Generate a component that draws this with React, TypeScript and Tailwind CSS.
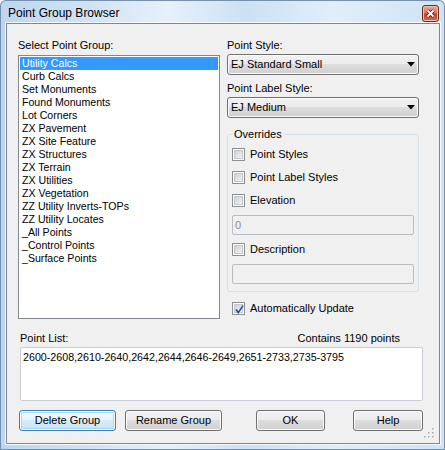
import React from 'react'

// Point Group Browser — Vista-style dialog
const GROUPS = [
  'Utility Calcs',
  'Curb Calcs',
  'Set Monuments',
  'Found Monuments',
  'Lot Corners',
  'ZX Pavement',
  'ZX Site Feature',
  'ZX Structures',
  'ZX Terrain',
  'ZX Utilities',
  'ZX Vegetation',
  'ZZ Utility Inverts-TOPs',
  'ZZ Utility Locates',
  '_All Points',
  '_Control Points',
  '_Surface Points',
]

const btnBase =
  'flex h-[21px] items-center justify-center rounded-[3px] border text-[11px] leading-[13px] text-black'
const btnNormal =
  'border-[#707070] bg-[linear-gradient(#f2f2f2_0%,#ebebeb_50%,#dddddd_50%,#cfcfcf_100%)] shadow-[inset_0_0_0_1px_#fbfbfb]'
const btnFocus =
  'border-[#3c7fb1] bg-[linear-gradient(#f3f9fd_0%,#e8f3fb_50%,#d7ebf8_50%,#cae4f6_100%)] shadow-[inset_0_0_0_1px_#ffffff,inset_0_0_0_2px_#a6d8f5]'

function Combo({ value }: { value: string }) {
  return (
    <div className="mt-[2px] flex h-[21px] items-center justify-between rounded-[3px] border border-[#707070] bg-[linear-gradient(#f2f2f2_0%,#ebebeb_50%,#dddddd_50%,#cfcfcf_100%)] pl-[3px] pr-[3px] shadow-[inset_0_0_0_1px_#fbfbfb]">
      <span className="leading-[13px]">{value}</span>
      <svg width="8" height="5" viewBox="0 0 8 5">
        <polygon points="0,0 8,0 4,4.5" fill="#000" />
      </svg>
    </div>
  )
}

function CheckBox({ label, checked }: { label: string; checked?: boolean }) {
  return (
    <div className="flex h-[16px] items-center">
      <span className="relative flex h-[13px] w-[13px] shrink-0 items-center justify-center border border-[#8e8f8f] bg-white">
        <span className="h-[9px] w-[9px] bg-[linear-gradient(135deg,#c9cdd3_0%,#e4e6e9_60%,#f7f7f7_100%)] shadow-[inset_0_0_0_1px_#c3c7cd]" />
        {checked && (
          <svg className="absolute left-[1px] top-[1px]" width="11" height="11" viewBox="0 0 11 11">
            <path d="M2 5.5 L4.3 8.6 L9 1.6" fill="none" stroke="#31508f" strokeWidth="1.7" />
          </svg>
        )}
      </span>
      <span className="ml-[5px] leading-[13px]">{label}</span>
    </div>
  )
}

function TextBox({ value }: { value?: string }) {
  return (
    <div className="flex h-[20px] w-full items-center rounded-[2px] border border-[#b9bdc3] bg-[#f0f0f0] pl-[2px] text-[#8a8a8a]">
      <span className="leading-[13px]">{value}</span>
    </div>
  )
}

export default function App() {
  return (
    <div className="h-[450px] w-[445px] font-['Liberation_Sans',Arial,sans-serif] text-[11px] text-black">
      <div className="flex h-full w-full flex-col rounded-t-[6px] bg-[linear-gradient(90deg,#bdd6ee_0%,#d0e3f5_20%,#e6f1fb_38%,#cce1f4_55%,#e0eefa_75%,#cfe3f5_100%)] pb-[6px] pl-[6px] pr-[5px] shadow-[inset_0_0_0_1px_#7591ad]">
        {/* Title bar */}
        <div className="flex h-[23px] shrink-0 items-start justify-between">
          <div className="ml-[2px] mt-[3px] flex h-[20px] items-center text-[12px] leading-[15px]">
            Point Group Browser
          </div>
          <div className="mr-[1px] mt-[5px] flex h-[17px] w-[17px] items-center justify-center rounded-[3px] border border-[#6e2b1c] bg-[linear-gradient(#eba896_0%,#d97a61_45%,#c2422a_55%,#d5694d_100%)] shadow-[inset_0_0_0_1px_#f3c3b6]">
            <svg width="9" height="9" viewBox="0 0 9 9">
              <path d="M1.5 1.5 L7.5 7.5 M7.5 1.5 L1.5 7.5" stroke="#4a1f16" strokeWidth="3.4" />
              <path d="M1.5 1.5 L7.5 7.5 M7.5 1.5 L1.5 7.5" stroke="#ffffff" strokeWidth="1.8" />
            </svg>
          </div>
        </div>

        {/* Client area */}
        <div className="relative flex flex-1 flex-col border border-[#7c8894] bg-[#f0f0f0] shadow-[0_0_0_1px_#f5f9fd]">
          <div className="flex pl-[11px] pt-[15px]">
            {/* Left column */}
            <div className="flex w-[202px] flex-col">
              <div className="h-[13px] leading-[13px]">Select Point Group:</div>
              <div className="mt-[3px] h-[264px] border border-[#828790] bg-white pt-[1px] text-[10.6px]">
                {GROUPS.map((g, i) => (
                  <div
                    key={g}
                    className={`mx-[1px] h-[13px] pl-[2px] leading-[13px] ${
                      i === 0 ? 'bg-[#3399ff] text-white' : ''
                    }`}
                  >
                    {g}
                  </div>
                ))}
              </div>
            </div>

            {/* Right column */}
            <div className="ml-[7px] flex w-[192px] flex-col">
              <div className="h-[13px] leading-[13px]">Point Style:</div>
              <Combo value="EJ Standard Small" />
              <div className="mt-[7px] h-[13px] leading-[13px]">Point Label Style:</div>
              <Combo value="EJ Medium" />

              <fieldset className="mt-[10px] rounded-[3px] border border-[#d5dfe5] px-[4px] pb-[7px]">
                <legend className="px-[2px] leading-[13px]">Overrides</legend>
                <div className="mt-[5px] flex flex-col">
                  <CheckBox label="Point Styles" />
                  <div className="mt-[7px]">
                    <CheckBox label="Point Label Styles" />
                  </div>
                  <div className="mt-[7px]">
                    <CheckBox label="Elevation" />
                  </div>
                  <div className="mt-[7px]">
                    <TextBox value="0" />
                  </div>
                  <div className="mt-[6px]">
                    <CheckBox label="Description" />
                  </div>
                  <div className="mt-[7px]">
                    <TextBox />
                  </div>
                </div>
              </fieldset>

              <div className="mt-[8px] pl-[5px]">
                <CheckBox label="Automatically Update" checked />
              </div>
            </div>
          </div>

          {/* Point list */}
          <div className="mt-[13px] flex w-[416px] flex-col pl-[13px]">
            <div className="flex h-[13px] justify-between pr-[23px] leading-[13px]">
              <span>Point List:</span>
              <span>Contains 1190 points</span>
            </div>
            <div className="mt-[2px] h-[54px] rounded-[2px] border border-[#c9ced6] bg-white pl-[2px] pt-[3px] text-[10.7px] leading-[13px]">
              2600-2608,2610-2640,2642,2644,2646-2649,2651-2733,2735-3795
            </div>
            <div className="-ml-[1px] mt-[9px] flex">
              <button className={`${btnBase} ${btnFocus} w-[97px]`}>Delete Group</button>
              <button className={`${btnBase} ${btnNormal} ml-[9px] w-[97px]`}>Rename Group</button>
              <button className={`${btnBase} ${btnNormal} ml-[34px] w-[69px]`}>OK</button>
              <button className={`${btnBase} ${btnNormal} ml-[28px] w-[70px]`}>Help</button>
            </div>
          </div>

          {/* Size grip */}
          <svg className="absolute bottom-[5px] right-[5px]" width="10" height="10" viewBox="0 0 10 10">
            {[
              [8, 0],
              [8, 4],
              [4, 4],
              [8, 8],
              [4, 8],
              [0, 8],
            ].map(([x, y]) => (
              <g key={`${x}-${y}`}>
                <rect x={x + 0.5} y={y + 0.5} width="1.5" height="1.5" fill="#ffffff" />
                <rect x={x} y={y} width="1.5" height="1.5" fill="#a0a6ad" />
              </g>
            ))}
          </svg>
        </div>
      </div>
    </div>
  )
}
